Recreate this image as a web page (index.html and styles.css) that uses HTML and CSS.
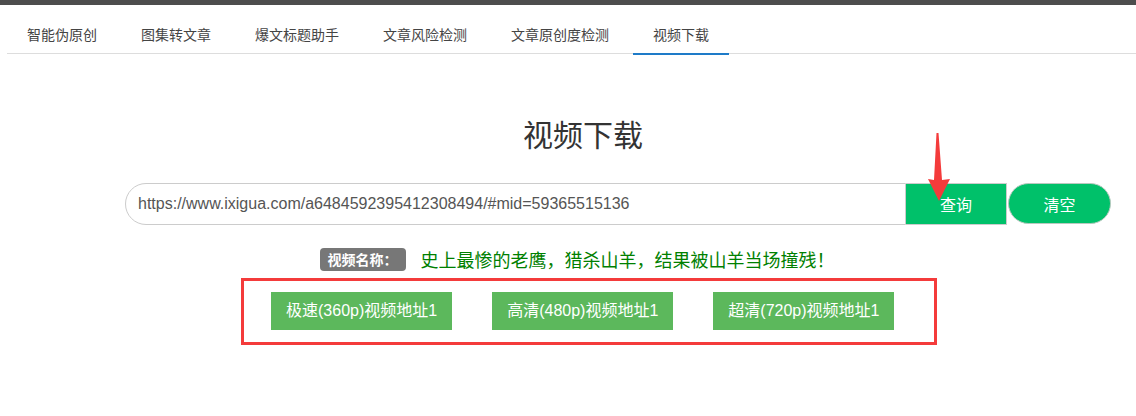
FILE: index.html
```html
<!DOCTYPE html>
<html lang="zh-CN">
<head>
    <meta charset="UTF-8">
    <title>视频下载</title>
    <link rel="stylesheet" href="styles.css">
</head>
<body>

    <!-- Top bar -->
    <div class="top-bar"></div>

    <!-- Tabs -->
    <ul class="nav-tabs">
        <li class="tab">智能伪原创</li>
        <li class="tab">图集转文章</li>
        <li class="tab">爆文标题助手</li>
        <li class="tab">文章风险检测</li>
        <li class="tab">文章原创度检测</li>
        <li class="tab active">视频下载</li>
    </ul>

    <!-- Main Content -->
    <div class="main">
        <h1 class="title">视频下载</h1>

        <div class="search-row">
            <input class="url-input" type="text" value="https://www.ixigua.com/a6484592395412308494/#mid=59365515136">
            <button class="btn-query">查询</button>
            <button class="btn-clear">清空</button>
        </div>

        <div class="name-row">
            <span class="label">视频名称：</span>
            <span class="video-name">史上最惨的老鹰，猎杀山羊，结果被山羊当场撞残！</span>
        </div>

        <div class="links-box">
            <a class="btn-link">极速(360p)视频地址1</a>
            <a class="btn-link">高清(480p)视频地址1</a>
            <a class="btn-link">超清(720p)视频地址1</a>
        </div>
    </div>

    <!-- Annotation arrow -->
    <svg class="arrow" width="40" height="80" viewBox="0 0 40 80">
        <polygon points="16.5,5 18.5,5 22,52 30,51 19,73 8,51 14,52" fill="#f43b3b"/>
    </svg>

</body>
</html>
```

FILE: styles.css
```css
/* General */
body {
    margin: 0;
    font-family: "Liberation Sans", "Noto Sans CJK SC", Arial, sans-serif;
    color: #333;
    background: #fff;
    position: relative;
}
.top-bar {
    height: 5px;
    background-color: #4d4d4d;
}

/* Tabs */
.nav-tabs {
    list-style: none;
    display: flex;
    margin: 0 0 0 7px;
    padding: 0;
    border-bottom: 1px solid #ddd;
}
.tab {
    padding: 20px 20px 8px;
    margin-right: 4px;
    margin-bottom: -2px;
    font-size: 14px;
    line-height: 20px;
    color: #444;
    border-bottom: 2px solid transparent;
}
.tab.active {
    border-bottom-color: #1e7bc8;
}

/* Main */
.main {
    padding-left: 30px;
}
.title {
    margin: 62px 0 0;
    text-align: center;
    font-size: 30px;
    line-height: 40px;
    font-weight: normal;
    color: #333;
}
.search-row {
    display: flex;
    margin: 27px 0 0 95px;
    height: 42px;
}
.url-input {
    box-sizing: border-box;
    width: 781px;
    height: 42px;
    padding: 0 12px;
    border: 1px solid #ccc;
    border-radius: 21px 0 0 21px;
    font-family: "Liberation Sans", Arial, sans-serif;
    font-size: 16px;
    color: #555;
    outline: none;
}
.btn-query {
    box-sizing: border-box;
    width: 101px;
    height: 42px;
    border: 1px solid #ccc;
    border-left: none;
    background-color: #00c16a;
    color: #fff;
    font-family: "Noto Sans CJK SC", sans-serif;
    font-size: 16px;
    padding: 0;
}
.btn-clear {
    box-sizing: border-box;
    width: 103px;
    height: 41px;
    margin-left: 1px;
    border: 1px solid #b9c9c0;
    border-radius: 21px;
    background-color: #00c16a;
    color: #fff;
    font-family: "Noto Sans CJK SC", sans-serif;
    font-size: 16px;
    padding: 0;
}

/* Video name */
.name-row {
    display: flex;
    justify-content: center;
    align-items: center;
    gap: 15px;
    margin-top: 23px;
    padding-right: 12px;
    height: 23px;
}
.label {
    background-color: #777;
    color: #fff;
    font-family: "Noto Sans CJK SC", sans-serif;
    font-weight: bold;
    font-size: 14px;
    line-height: 23px;
    padding: 0 8px;
    border-radius: 4px;
}
.video-name {
    color: #008000;
    font-family: "Noto Sans CJK SC", sans-serif;
    font-size: 18px;
    line-height: 23px;
}

/* Links */
.links-box {
    box-sizing: border-box;
    display: flex;
    gap: 40px;
    width: 696px;
    margin: 7px 0 0 211px;
    padding: 11px 0 12px 27px;
    border: 3px solid #f43b3b;
}
.btn-link {
    display: block;
    padding: 8px 15px;
    background-color: #5cb85c;
    color: #fff;
    font-size: 16px;
    line-height: 22px;
    text-decoration: none;
    white-space: nowrap;
}

/* Arrow overlay */
.arrow {
    position: absolute;
    left: 920px;
    top: 128px;
}
```
